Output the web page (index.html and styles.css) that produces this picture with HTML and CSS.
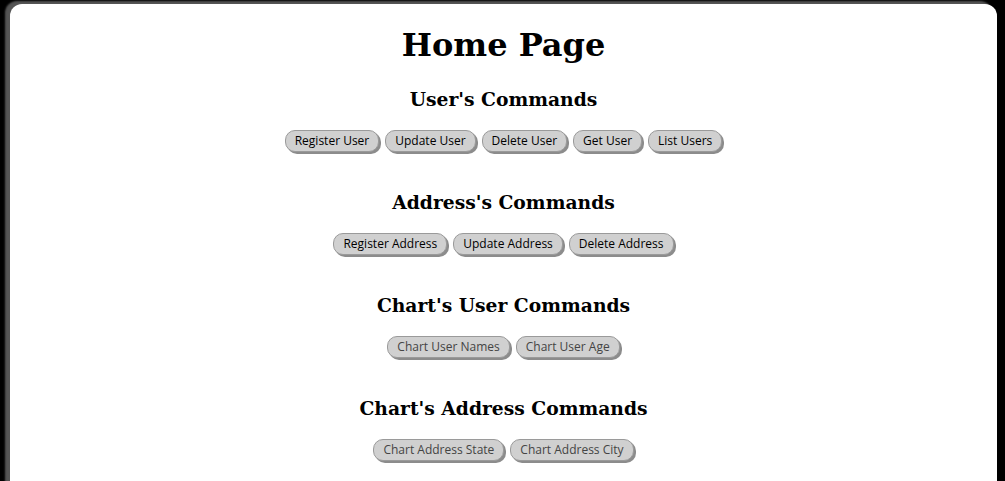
FILE: index.html
```html
<!DOCTYPE html>
<html>
<head>
<meta charset="utf-8">
<title>Home Page</title>
<link rel="stylesheet" href="styles.css">
</head>
<body>
<div class="frame">
  <main class="page">
    <h1 class="title">Home Page</h1>
    <section class="group">
      <h2 class="group-title">User's Commands</h2>
      <div class="buttons">
        <button class="btn">Register User</button>
        <button class="btn">Update User</button>
        <button class="btn">Delete User</button>
        <button class="btn">Get User</button>
        <button class="btn">List Users</button>
      </div>
    </section>
    <section class="group">
      <h2 class="group-title">Address's Commands</h2>
      <div class="buttons">
        <button class="btn">Register Address</button>
        <button class="btn">Update Address</button>
        <button class="btn">Delete Address</button>
      </div>
    </section>
    <section class="group">
      <h2 class="group-title">Chart's User Commands</h2>
      <div class="buttons">
        <button class="btn btn-muted">Chart User Names</button>
        <button class="btn btn-muted">Chart User Age</button>
      </div>
    </section>
    <section class="group">
      <h2 class="group-title">Chart's Address Commands</h2>
      <div class="buttons">
        <button class="btn btn-muted">Chart Address State</button>
        <button class="btn btn-muted">Chart Address City</button>
      </div>
    </section>
  </main>
</div>
</body>
</html>
```

FILE: styles.css
```css
html, body {
  margin: 0;
  padding: 0;
  background: #000;
  height: 100%;
  overflow: hidden;
}

.frame {
  padding: 4px 8px 0 10px;
  height: 100%;
  box-sizing: border-box;
}

.page {
  background: #fff;
  border-radius: 12px;
  box-shadow: -5px -3px 2px #555;
  min-height: 600px;
  padding-top: 21px;
  text-align: center;
  font-family: "DejaVu Serif", serif;
  color: #000;
}

.title {
  margin: 0 0 22px;
  font-size: 32px;
  line-height: 40px;
  font-weight: bold;
}

.group {
  margin-bottom: 38px;
}

.group-title {
  margin: 0 0 19px;
  font-size: 18.72px;
  line-height: 24px;
  font-weight: bold;
}

.buttons {
  display: flex;
  justify-content: center;
  gap: 6px;
}

.btn {
  font-family: "Open Sans", "Noto Sans", sans-serif;
  font-size: 12px;
  line-height: 16px;
  height: 22px;
  padding: 2px 9px;
  color: #000;
  background: #d0d0d0;
  border: 1px solid #9a9a9a;
  border-radius: 10px;
  box-shadow: 2px 2px 0 #8c8c8c;
  cursor: pointer;
}

.btn-muted {
  color: #444;
}
```
